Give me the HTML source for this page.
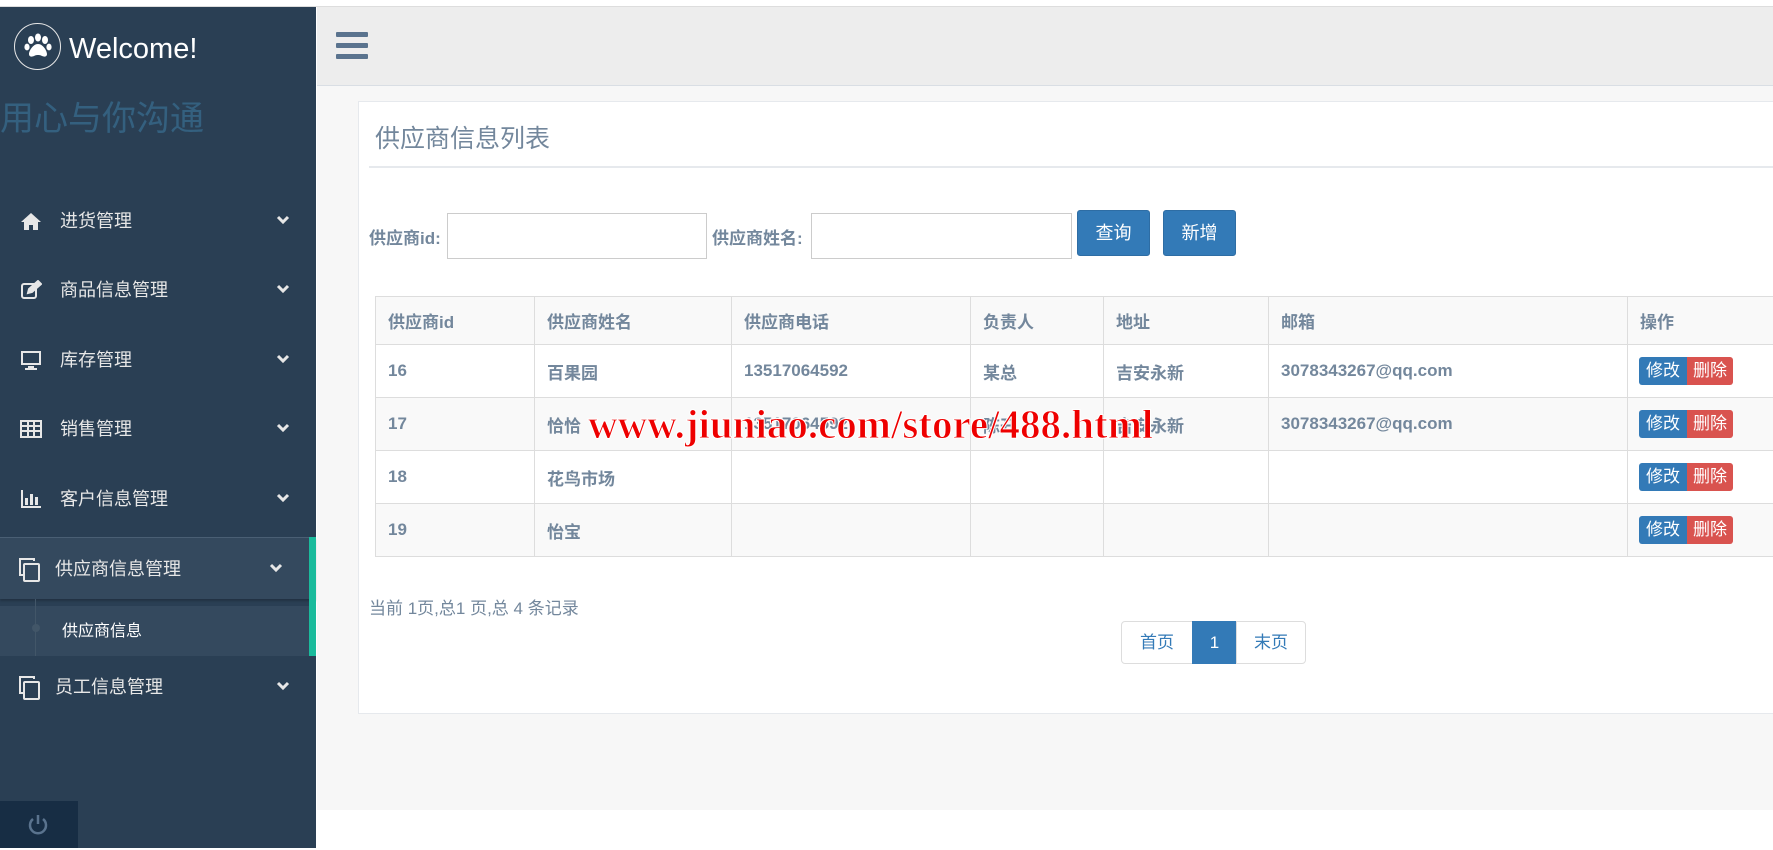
<!DOCTYPE html>
<html><head><meta charset="utf-8"><style>
*{margin:0;padding:0;box-sizing:border-box}
body{width:1773px;height:850px;overflow:hidden;background:#fff;font-family:"Liberation Sans","Noto Sans CJK SC",sans-serif;position:relative}
.abs{position:absolute}
#side{left:0;top:7px;width:316px;height:841px;background:#2a3f54}
.mi{position:absolute;left:0;width:316px;height:40px;color:#e7e7e7;font-size:18px;line-height:40px}
.mi .t{position:absolute;left:60px}
.mi .ic{position:absolute;left:20px;top:10px;width:22px;height:20px}
.chev{position:absolute;left:276px;top:14px;width:14px;height:10px}
#main{left:317px;top:7px;width:1456px;height:803px;background:#f7f7f7}
#hdr{left:317px;top:7px;width:1456px;height:79px;background:#ededed;border-bottom:1px solid #d9dee4}
.panel{left:358px;top:101px;width:1415px;height:613px;background:#fff;border:1px solid #e6e9ed;border-right:none}
.lbl{color:#73879c;font-weight:bold;font-size:17px}
.inp{background:#fff;border:1px solid #ccc;height:46px}
.btn{background:#337ab7;color:#fff;border:1px solid #2e6da4;border-radius:3px;font-size:18px;text-align:center;line-height:44px}
table{border-collapse:collapse;position:absolute;left:375px;top:296px;color:#73879c;font-size:17px;table-layout:fixed;width:1412px;font-weight:bold}
td{border:1px solid #ddd;padding:0 12px;height:53px;vertical-align:middle;white-space:nowrap;overflow:hidden}
tr.h td{height:48px}
tr.s td{background:#f9f9f9}
.ops{display:inline-flex;font-size:17px;font-weight:normal;color:#fff;line-height:28px;height:28px;margin-left:-1px}
.ops span:first-child{background:#337ab7;border-radius:3px 0 0 3px;padding:0 7px}
.ops span:last-child{background:#d9534f;border-radius:0 3px 3px 0;padding:0 6px}
.pg{top:621px;height:43px;border:1px solid #ddd;color:#337ab7;font-size:17px;text-align:center;line-height:41px;background:#fff}
</style></head><body>
<div class="abs" style="left:0;top:0;width:1773px;height:7px;background:#fff;border-bottom:1px solid #ddd"></div>
<div id="side" class="abs">
 <div class="abs" style="left:14px;top:16px;width:47px;height:47px;border:1.5px solid #e7e7e7;border-radius:50%"></div>
 <svg class="abs" style="left:22px;top:24px" width="32" height="32" viewBox="0 0 32 32" fill="#fff"><ellipse cx="9" cy="9" rx="3" ry="4"/><ellipse cx="16" cy="6.5" rx="3" ry="4"/><ellipse cx="23" cy="9" rx="3" ry="4"/><ellipse cx="5" cy="16" rx="2.6" ry="3.4"/><ellipse cx="27" cy="16" rx="2.6" ry="3.4"/><path d="M16 13c-5 0-9 7-9 10s3 3 5 2 3-1 4-1 2 0 4 1 5 1 5-2-4-10-9-10z"/></svg>
 <div class="abs" style="left:69px;top:22px;font-size:29px;color:#fff;line-height:40px">Welcome!</div>
 <div class="abs" style="left:0;top:92px;font-size:34px;color:#34607f;line-height:40px">用心与你沟通</div>
 <div class="mi" style="top:194px"><svg class="ic" viewBox="0 0 22 20" fill="#e7e7e7"><path d="M11 2L1 11h3v8h5v-5h4v5h5v-8h3z"/></svg><span class="t">进货管理</span><svg class="chev" viewBox="0 0 14 10"><path d="M2 2l5 5 5-5" stroke="#e7e7e7" stroke-width="3" fill="none"/></svg></div>
 <div class="mi" style="top:263px"><svg class="ic" viewBox="0 0 22 20" fill="none" stroke="#e7e7e7" stroke-width="2"><rect x="2" y="4" width="14" height="14" rx="2"/><path d="M8 13l1-4 9-8 3 3-9 8z" fill="#e7e7e7"/></svg><span class="t">商品信息管理</span><svg class="chev" viewBox="0 0 14 10"><path d="M2 2l5 5 5-5" stroke="#e7e7e7" stroke-width="3" fill="none"/></svg></div>
 <div class="mi" style="top:333px"><svg class="ic" viewBox="0 0 22 20" fill="#e7e7e7"><path d="M1 1h20v14H1zM3 3v10h16V3zM8 16h6v2h3v2H5v-2h3z"/></svg><span class="t">库存管理</span><svg class="chev" viewBox="0 0 14 10"><path d="M2 2l5 5 5-5" stroke="#e7e7e7" stroke-width="3" fill="none"/></svg></div>
 <div class="mi" style="top:402px"><svg class="ic" viewBox="0 0 22 20" fill="none" stroke="#e7e7e7" stroke-width="2"><rect x="1" y="2" width="20" height="16"/><path d="M1 7h20M1 12h20M8 2v16M14 2v16"/></svg><span class="t">销售管理</span><svg class="chev" viewBox="0 0 14 10"><path d="M2 2l5 5 5-5" stroke="#e7e7e7" stroke-width="3" fill="none"/></svg></div>
 <div class="mi" style="top:472px"><svg class="ic" viewBox="0 0 22 20" fill="#e7e7e7"><path d="M1 1h2v16h18v2H1zM5 9h3v7H5zM10 5h3v11h-3zM15 8h3v8h-3z"/></svg><span class="t">客户信息管理</span><svg class="chev" viewBox="0 0 14 10"><path d="M2 2l5 5 5-5" stroke="#e7e7e7" stroke-width="3" fill="none"/></svg></div>
 <div class="abs" style="left:0;top:530px;width:316px;height:62px;background:#34495e;border-top:1px solid #4a5f74;box-shadow:0 2px 2px rgba(0,0,0,.2)"></div>
 <div class="abs" style="left:0;top:599px;width:309px;height:50px;background:#34495e"></div>
 <div class="abs" style="left:35px;top:592px;width:1px;height:57px;background:#425668"></div>
 <div class="abs" style="left:32px;top:617px;width:8px;height:8px;border-radius:50%;background:#425668"></div>
 <div class="abs" style="left:309px;top:530px;width:7px;height:119px;background:#1abb9c"></div>
 <div class="mi" style="top:542px"><svg class="ic" style="left:18px;top:8px;width:24px;height:26px" viewBox="0 0 24 26" fill="none" stroke="#e7e7e7" stroke-width="2"><path d="M16 4V2H2v16h3"/><rect x="6" y="7" width="15" height="17" rx="1"/></svg><span class="t" style="left:55px">供应商信息管理</span><svg class="chev" style="left:269px" viewBox="0 0 14 10"><path d="M2 2l5 5 5-5" stroke="#e7e7e7" stroke-width="3" fill="none"/></svg></div>
 <div class="abs" style="left:62px;top:607px;font-size:16px;color:#fff;line-height:36px">供应商信息</div>
 <div class="mi" style="top:660px"><svg class="ic" style="left:18px;top:8px;width:24px;height:26px" viewBox="0 0 24 26" fill="none" stroke="#e7e7e7" stroke-width="2"><path d="M16 4V2H2v16h3"/><rect x="6" y="7" width="15" height="17" rx="1"/></svg><span class="t" style="left:55px">员工信息管理</span><svg class="chev" viewBox="0 0 14 10"><path d="M2 2l5 5 5-5" stroke="#e7e7e7" stroke-width="3" fill="none"/></svg></div>
 <div class="abs" style="left:0;top:794px;width:78px;height:47px;background:#172d44"></div>
 <svg class="abs" style="left:26px;top:806px" width="24" height="24" viewBox="0 0 24 24" fill="none" stroke="#5a738e" stroke-width="2.5"><path d="M7 6a8 8 0 1 0 10 0M12 2v9"/></svg>
</div>
<div id="main" class="abs"></div>
<div id="hdr" class="abs"></div>
<svg class="abs" style="left:336px;top:32px" width="32" height="28" viewBox="0 0 32 28" fill="#5a738e"><rect y="0" width="32" height="5" rx="1"/><rect y="11" width="32" height="5" rx="1"/><rect y="22" width="32" height="5" rx="1"/></svg>
<div class="abs panel"></div>
<div class="abs" style="left:375px;top:122px;font-size:25px;color:#73879c;line-height:34px">供应商信息列表</div>
<div class="abs" style="left:369px;top:166px;width:1404px;height:2px;background:#e6e9ed"></div>
<div class="abs lbl" style="left:369px;top:224px">供应商id:</div>
<div class="abs inp" style="left:447px;top:213px;width:260px"></div>
<div class="abs lbl" style="left:712px;top:224px">供应商姓名:</div>
<div class="abs inp" style="left:811px;top:213px;width:261px"></div>
<div class="abs btn" style="left:1077px;top:210px;width:73px">查询</div>
<div class="abs btn" style="left:1163px;top:210px;width:73px">新增</div>
<table>
<colgroup><col style="width:159px"><col style="width:197px"><col style="width:239px"><col style="width:133px"><col style="width:165px"><col style="width:359px"><col style="width:160px"></colgroup>
<tr class="h s"><td>供应商id</td><td>供应商姓名</td><td>供应商电话</td><td>负责人</td><td>地址</td><td>邮箱</td><td style="border-right:none">操作</td></tr>
<tr><td>16</td><td>百果园</td><td>13517064592</td><td>某总</td><td>吉安永新</td><td>3078343267@qq.com</td><td style="border-right:none"><span class="ops"><span>修改</span><span>删除</span></span></td></tr>
<tr class="s"><td>17</td><td>恰恰</td><td>13517064592</td><td>陈开</td><td>吉安永新</td><td>3078343267@qq.com</td><td style="border-right:none"><span class="ops"><span>修改</span><span>删除</span></span></td></tr>
<tr><td>18</td><td>花鸟市场</td><td></td><td></td><td></td><td></td><td style="border-right:none"><span class="ops"><span>修改</span><span>删除</span></span></td></tr>
<tr class="s"><td>19</td><td>怡宝</td><td></td><td></td><td></td><td></td><td style="border-right:none"><span class="ops"><span>修改</span><span>删除</span></span></td></tr>
</table>
<div class="abs" style="left:588px;top:401px;font-family:'Liberation Serif',serif;font-weight:bold;font-size:41px;color:#e00;-webkit-text-stroke:1px #fff;line-height:46px;white-space:nowrap">www.jiuniao.com/store/488.html</div>
<div class="abs" style="left:369px;top:594px;font-size:17px;color:#73879c">当前 1页,总1 页,总 4 条记录</div>
<div class="abs pg" style="left:1121px;width:72px;border-radius:4px 0 0 4px">首页</div>
<div class="abs pg" style="left:1192px;width:45px;background:#337ab7;color:#fff;border-color:#337ab7">1</div>
<div class="abs pg" style="left:1236px;width:70px;border-radius:0 4px 4px 0">末页</div>
</body></html>
